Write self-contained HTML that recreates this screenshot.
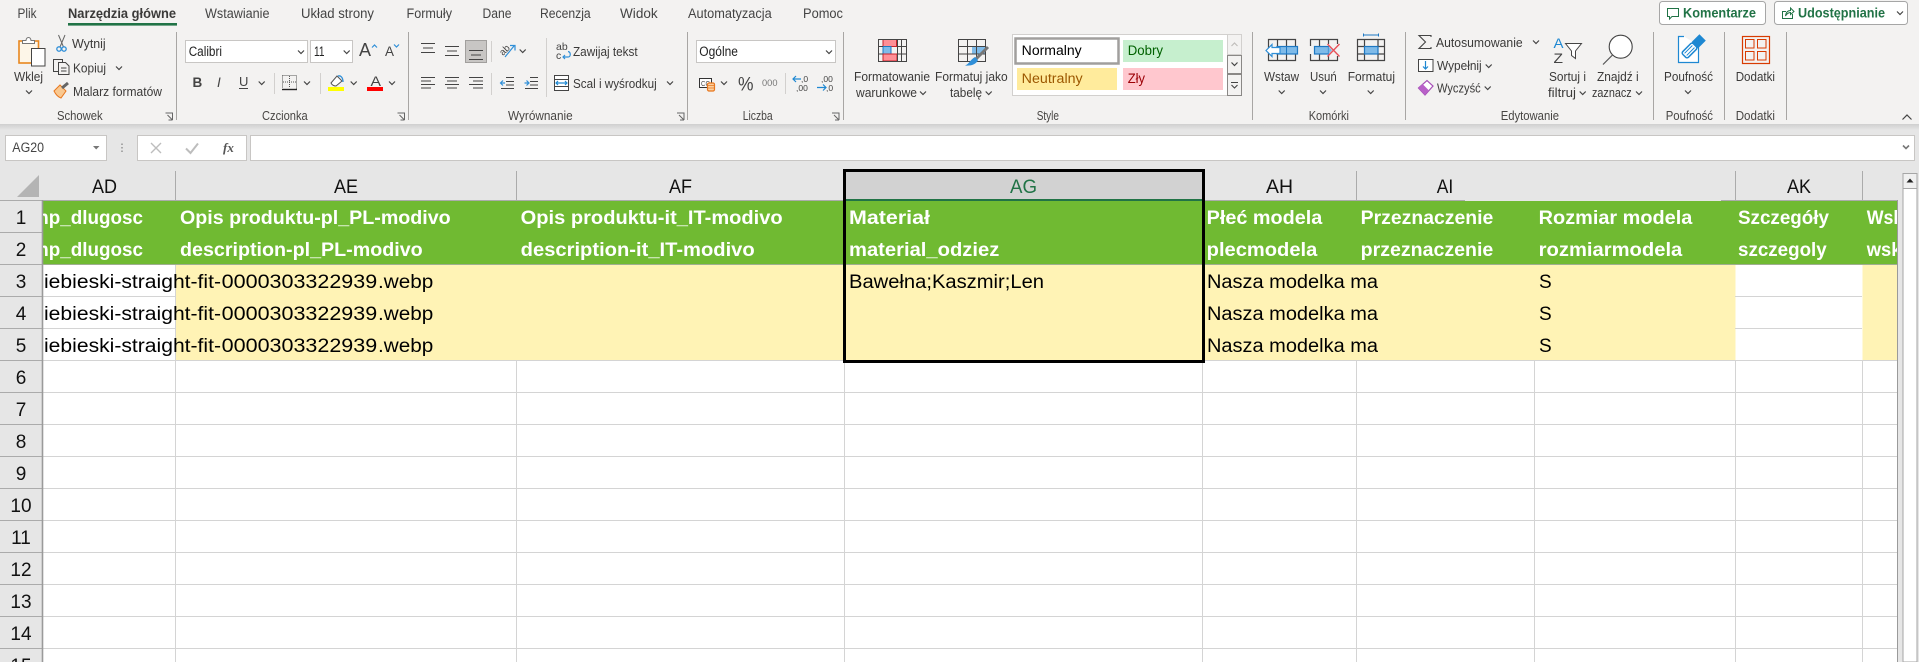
<!DOCTYPE html>
<html lang="pl"><head><meta charset="utf-8"><title>Excel</title>
<style>
html,body{margin:0;padding:0;background:#fff;overflow:hidden}
svg{display:block}
text{font-family:"Liberation Sans",sans-serif;white-space:pre}
.t{font-size:13.5px;fill:#444}
.r{font-size:12.5px;fill:#3b3a39}
.g{font-size:12.5px;fill:#484644}
.c{font-size:19px;fill:#000}
.h{font-size:19px;font-weight:bold;fill:#fff}
.n{font-size:19px;fill:#111}
.ln{fill:none;stroke:#444;stroke-width:1.1}
</style></head><body>
<svg xmlns="http://www.w3.org/2000/svg" width="1919" height="662" viewBox="0 0 1919 662">
<defs>
<path id="ch" d="M-3-1.5 0 1.5 3-1.5" fill="none" stroke="#444" stroke-width="1.2"/>
<path id="dl" d="M0 0H7V7M2 2 7 7M3 7H7" fill="none" stroke="#666" stroke-width="1"/>
<clipPath id="cl"><rect x="43" y="200" width="1854" height="462"/></clipPath>
<linearGradient id="sh" x1="0" y1="0" x2="0" y2="1"><stop offset="0" stop-color="#cfcfcf"/><stop offset="1" stop-color="#e6e6e6"/></linearGradient>
</defs>
<rect width="1919" height="662" fill="#fff"/>
<!-- ribbon -->
<rect width="1919" height="124" fill="#f3f2f1"/>
<rect y="124" width="1919" height="77" fill="#e6e6e6"/>
<rect y="124" width="1919" height="6" fill="url(#sh)"/>
<!-- tabs -->
<text class="t" x="17.5" y="18" textLength="19" lengthAdjust="spacingAndGlyphs">Plik</text>
<text class="t" x="68" y="18" textLength="108" lengthAdjust="spacingAndGlyphs" style="font-weight:bold;fill:#3b3a39">Narzędzia główne</text>
<rect x="68" y="23" width="109" height="2.6" fill="#217346"/>
<text class="t" x="205" y="18" textLength="64.5" lengthAdjust="spacingAndGlyphs">Wstawianie</text>
<text class="t" x="301" y="18" textLength="73" lengthAdjust="spacingAndGlyphs">Układ strony</text>
<text class="t" x="406.5" y="18" textLength="45.5" lengthAdjust="spacingAndGlyphs">Formuły</text>
<text class="t" x="482.5" y="18" textLength="29" lengthAdjust="spacingAndGlyphs">Dane</text>
<text class="t" x="540" y="18" textLength="50.7" lengthAdjust="spacingAndGlyphs">Recenzja</text>
<text class="t" x="620" y="18" textLength="37.7" lengthAdjust="spacingAndGlyphs">Widok</text>
<text class="t" x="688" y="18" textLength="83.7" lengthAdjust="spacingAndGlyphs">Automatyzacja</text>
<text class="t" x="803" y="18" textLength="40" lengthAdjust="spacingAndGlyphs">Pomoc</text>
<!-- top right buttons -->
<rect x="1659.5" y="1.5" width="106" height="23" rx="3" fill="#fff" stroke="#a6a6a6"/>
<path d="M1667.5 8.5H1678.5V16.5H1672L1669.5 19V16.5H1667.5Z" fill="none" stroke="#217346"/>
<text x="1683" y="17.5" textLength="73" lengthAdjust="spacingAndGlyphs" style="font-size:13.5px;font-weight:bold;fill:#217346">Komentarze</text>
<rect x="1774.5" y="1.5" width="133" height="23" rx="3" fill="#fff" stroke="#a6a6a6"/>
<path d="M1786 11.5H1782.5V18.5H1792.5V14M1785.5 16C1786 12 1788 10.5 1790.5 10.5V8L1794 11.5 1790.5 14.5V12.5C1788.5 12.5 1787 13.5 1785.5 16Z" fill="none" stroke="#217346"/>
<text x="1798" y="17.5" textLength="87" lengthAdjust="spacingAndGlyphs" style="font-size:13.5px;font-weight:bold;fill:#217346">Udostępnianie</text>
<use href="#ch" x="1900" y="13"/>
<!-- group separators -->
<g stroke="#a8a6a4" stroke-width="1">
<path d="M176.5 32V120M408.5 32V120M687.5 32V120M843.5 32V120M1252.5 32V120M1405.5 32V120M1653.5 32V120M1724.5 32V120M1786.5 32V120"/>
</g>
<g stroke="#d2d0ce" stroke-width="1">
<path d="M274.5 73V94M320.5 73V94M491.5 41V62M491.5 73V95M546.5 38V97M785.5 73V94"/>
</g>
<!-- group labels -->
<text class="g" x="57" y="120" textLength="45.7" lengthAdjust="spacingAndGlyphs">Schowek</text>
<text class="g" x="262" y="120" textLength="45.7" lengthAdjust="spacingAndGlyphs">Czcionka</text>
<text class="g" x="508" y="120" textLength="64.7" lengthAdjust="spacingAndGlyphs">Wyrównanie</text>
<text class="g" x="742.7" y="120" textLength="30" lengthAdjust="spacingAndGlyphs">Liczba</text>
<text class="g" x="1036.7" y="120" textLength="22.3" lengthAdjust="spacingAndGlyphs">Style</text>
<text class="g" x="1308.7" y="120" textLength="40.3" lengthAdjust="spacingAndGlyphs">Komórki</text>
<text class="g" x="1500.7" y="120" textLength="58.3" lengthAdjust="spacingAndGlyphs">Edytowanie</text>
<text class="g" x="1665.7" y="120" textLength="47.3" lengthAdjust="spacingAndGlyphs">Poufność</text>
<text class="g" x="1735.7" y="120" textLength="39.3" lengthAdjust="spacingAndGlyphs">Dodatki</text>
<use href="#dl" x="165.5" y="113"/><use href="#dl" x="397.5" y="113"/><use href="#dl" x="677" y="113"/><use href="#dl" x="832" y="113"/>
<path d="M1902.5 119.5 1907 115 1911.5 119.5" fill="none" stroke="#444" stroke-width="1.2"/>
<!-- clipboard -->
<rect x="19" y="41" width="19.5" height="22" fill="#fdf6e8" stroke="#e8871e" stroke-width="1.6"/>
<path d="M22.5 43.5V40.5H26C26.5 36.5 30.5 36.5 31 40.5H34.5V43.5Z" fill="#fff" stroke="#777"/>
<rect x="31.5" y="48.5" width="13.5" height="17.5" fill="#fff" stroke="#444"/>
<text class="r" x="14" y="81" textLength="29" lengthAdjust="spacingAndGlyphs">Wklej</text>
<use href="#ch" x="29" y="92"/>
<path d="M58.5 35 63.5 47M65 35 60 47" fill="none" stroke="#666"/>
<circle cx="59" cy="49" r="2.2" fill="none" stroke="#2f8fd8" stroke-width="1.3"/><circle cx="64" cy="49" r="2.2" fill="none" stroke="#2f8fd8" stroke-width="1.3"/>
<text class="r" x="72" y="48" textLength="33.7" lengthAdjust="spacingAndGlyphs">Wytnij</text>
<path d="M58 71.5H53.5V59.5H62.5V62.5M58.5 62.5H65.5L69 66V74.5H58.5ZM61 68H66.5M61 71H66.5" fill="none" stroke="#444"/>
<text class="r" x="73" y="72.5" textLength="33" lengthAdjust="spacingAndGlyphs">Kopiuj</text>
<use href="#ch" x="119" y="68"/>
<path d="M54 91 60 85 66 91 61 98C58 97 56 95 54 91Z" fill="#f9c890" stroke="#e8771e"/>
<path d="M62 88 68 83" stroke="#666" stroke-width="3" fill="none"/>
<text class="r" x="73" y="96" textLength="89" lengthAdjust="spacingAndGlyphs">Malarz formatów</text>
<!-- font -->
<rect x="185.5" y="40.5" width="122" height="22" fill="#fff" stroke="#c8c6c4"/>
<text class="t" x="188.7" y="56" textLength="33.3" lengthAdjust="spacingAndGlyphs" style="fill:#222">Calibri</text>
<use href="#ch" x="301" y="52"/>
<rect x="310.5" y="40.5" width="42" height="22" fill="#fff" stroke="#c8c6c4"/>
<text class="t" x="314" y="56" textLength="10.5" lengthAdjust="spacingAndGlyphs" style="fill:#222">11</text>
<use href="#ch" x="346.7" y="52"/>
<text x="359" y="56" textLength="12" lengthAdjust="spacingAndGlyphs" style="font-size:18px;fill:#444">A</text>
<path d="M372 47.5 374.5 45 377 47.5" fill="none" stroke="#2f8fd8" stroke-width="1.2"/>
<text x="385" y="56" textLength="9" lengthAdjust="spacingAndGlyphs" style="font-size:13.5px;fill:#444">A</text>
<path d="M394 44.5 396.5 47 399 44.5" fill="none" stroke="#2f8fd8" stroke-width="1.2"/>
<text x="192.5" y="87" style="font-size:13.5px;font-weight:bold;fill:#444">B</text>
<text x="217" y="87" style="font-size:13.5px;font-style:italic;fill:#444">I</text>
<text x="239" y="86" style="font-size:13px;fill:#444">U</text>
<path d="M239 88.5H248" stroke="#444"/>
<use href="#ch" x="261.7" y="83"/>
<path d="M282.5 75.5H296.5V88.5M282.5 75.5V88M289.5 76V88M283 82H296" fill="none" stroke="#555" stroke-dasharray="1 1"/>
<path d="M282 89.5H297" stroke="#222" stroke-width="1.4"/>
<use href="#ch" x="307" y="83"/>
<path d="M331 83 337 76 342 81 336 86C334 86 332 85 331 83Z" fill="#fff" stroke="#555"/>
<path d="M338 76C341 75 343 78 343 82" fill="none" stroke="#2f8fd8" stroke-width="1.3"/>
<rect x="328" y="87" width="16" height="4" fill="#ffff00"/>
<use href="#ch" x="353.7" y="83"/>
<text x="370.5" y="86" textLength="10.5" lengthAdjust="spacingAndGlyphs" style="font-size:14px;fill:#444">A</text>
<rect x="367" y="87" width="16" height="4" fill="#ff0000"/>
<use href="#ch" x="392" y="83"/>
<!-- alignment -->
<rect x="465.5" y="40.5" width="21" height="22" fill="#c8c6c4" stroke="#a19f9d"/>
<path class="ln" d="M421 43.5H435M423 48H433M421 52.5H435M445 46.5H459M447 51H457M445 55.5H459M469 50.5H483M471 55H481M469 59.5H483"/>
<path class="ln" d="M421 77.5H435M421 81H431M421 84.5H435M421 88H431M445 77.5H459M447 81H457M445 84.5H459M447 88H457M469 77.5H483M473 81H483M469 84.5H483M473 88H483"/>
<text x="0" y="0" transform="translate(503 56) rotate(-45)" style="font-size:9.5px;fill:#444">ab</text>
<path d="M505 57 514 46M510 45.5H515V50.5" fill="none" stroke="#2f8fd8" stroke-width="1.2"/>
<use href="#ch" x="522.7" y="51"/>
<path class="ln" d="M506 77.5H514M506 81.5H514M506 85H514M501 88.5H514"/>
<path d="M505 83H500.5M503 80.5 500.5 83 503 85.5" fill="none" stroke="#2f8fd8" stroke-width="1.2"/>
<path class="ln" d="M530 77.5H538M530 81.5H538M530 85H538M525 88.5H538"/>
<path d="M524.5 83H529M526.5 80.5 529 83 526.5 85.5" fill="none" stroke="#2f8fd8" stroke-width="1.2"/>
<text x="556" y="50" style="font-size:10.5px;fill:#444">ab</text>
<text x="556" y="59" style="font-size:10.5px;fill:#444">c</text>
<path d="M563 57H568C571 57 571 52 568 51.5M565 55 563 57 565 59" fill="none" stroke="#2f8fd8" stroke-width="1.2"/>
<text class="r" x="573" y="56" textLength="64.7" lengthAdjust="spacingAndGlyphs">Zawijaj tekst</text>
<rect x="554.5" y="75.5" width="14" height="15" fill="#fff" stroke="#444"/>
<path d="M555 79.5H568M555 86.5H568" stroke="#444"/>
<rect x="555" y="80" width="13" height="6" fill="#fff"/>
<path d="M556 83H567M558 81 556 83 558 85M565 81 567 83 565 85" fill="none" stroke="#1e88d2" stroke-width="1.2"/>
<text class="r" x="573" y="88" textLength="83.7" lengthAdjust="spacingAndGlyphs">Scal i wyśrodkuj</text>
<use href="#ch" x="670" y="83"/>
<!-- number -->
<rect x="696.5" y="40.5" width="139" height="22" fill="#fff" stroke="#c8c6c4"/>
<text class="t" x="699.3" y="56" textLength="38.7" lengthAdjust="spacingAndGlyphs" style="fill:#222">Ogólne</text>
<use href="#ch" x="829" y="52"/>
<rect x="699.5" y="78.5" width="12" height="9" fill="#fff" stroke="#333"/>
<text x="701" y="86" textLength="9" lengthAdjust="spacingAndGlyphs" style="font-size:7px;fill:#444">CC</text>
<rect x="707.5" y="83" width="7" height="8" rx="1.5" fill="#fbd0a0" stroke="#e8771e" stroke-width="1.2"/>
<path d="M707.5 85.5H714.5M707.5 88H714.5" stroke="#e8771e" stroke-width=".8"/>
<use href="#ch" x="724" y="83"/>
<text x="738" y="90.5" textLength="15.5" lengthAdjust="spacingAndGlyphs" style="font-size:19px;fill:#444">%</text>
<text x="762" y="86" textLength="15.5" lengthAdjust="spacingAndGlyphs" style="font-size:9.5px;fill:#777">000</text>
<path d="M793 79H801M796 76 793 79 796 82" fill="none" stroke="#1e88d2" stroke-width="1.2"/>
<text x="801" y="82" style="font-size:8.5px;fill:#444">,0</text>
<text x="796" y="91" style="font-size:8.5px;fill:#444">,00</text>
<text x="821" y="82" style="font-size:8.5px;fill:#444">,00</text>
<path d="M817 87.5H826M823 84.5 826 87.5 823 90.5" fill="none" stroke="#1e88d2" stroke-width="1.2"/>
<text x="826" y="91" style="font-size:8.5px;fill:#444">,0</text>
<!-- conditional format -->
<rect x="883" y="39.5" width="13.5" height="7" fill="#ff8f96" stroke="#c8232c"/>
<rect x="883" y="46.5" width="8" height="7.5" fill="#7fbbe9" stroke="#1e78c2"/>
<rect x="883" y="54" width="14" height="7" fill="#ff8f96" stroke="#c8232c"/>
<path d="M878.5 39.5H906.5V61.5H878.5ZM878.5 46.5H883M897 46.5H906.5M878.5 54H883M897 54H906.5M885 39.5M897.5 39.5V61.5M901.5 39.5V61.5" fill="none" stroke="#444"/>
<text class="r" x="854" y="81" textLength="76" lengthAdjust="spacingAndGlyphs">Formatowanie</text>
<text class="r" x="856" y="97" textLength="61" lengthAdjust="spacingAndGlyphs">warunkowe</text>
<use href="#ch" x="923" y="93"/>
<!-- format as table -->
<rect x="972" y="46.5" width="14" height="7.5" fill="#7fbbe9"/>
<path d="M958.5 39.5H985.5V61.5H958.5ZM958.5 46.5H985.5M958.5 54H985.5M967.5 39.5V61.5M976.5 39.5V61.5" fill="none" stroke="#444"/>
<path d="M988 47 976 59" stroke="#777" stroke-width="3"/>
<path d="M975 57 978 60C976 65 970 66 965 65.5 969 64 970 60 975 57Z" fill="#2f8fd8"/>
<text class="r" x="935" y="81" textLength="72.7" lengthAdjust="spacingAndGlyphs">Formatuj jako</text>
<text class="r" x="950" y="97" textLength="32" lengthAdjust="spacingAndGlyphs">tabelę</text>
<use href="#ch" x="988.7" y="93"/>
<!-- styles -->
<rect x="1012.5" y="34.5" width="229" height="61" fill="#fff" stroke="#d2d0ce"/>
<rect x="1015.5" y="38.5" width="103" height="25" fill="#fff" stroke="#a19f9d" stroke-width="2.5"/>
<text class="t" x="1021.7" y="55" textLength="60" lengthAdjust="spacingAndGlyphs" style="fill:#000">Normalny</text>
<rect x="1123" y="40" width="100" height="22" fill="#c6efce"/>
<text class="t" x="1127.7" y="55" textLength="35.3" lengthAdjust="spacingAndGlyphs" style="fill:#006100">Dobry</text>
<rect x="1017" y="68" width="100" height="22" fill="#ffeb9c"/>
<text class="t" x="1021.7" y="83" textLength="61" lengthAdjust="spacingAndGlyphs" style="fill:#9c5700">Neutralny</text>
<rect x="1123" y="68" width="100" height="22" fill="#ffc7ce"/>
<text class="t" x="1127.7" y="83" textLength="17.3" lengthAdjust="spacingAndGlyphs" style="fill:#9c0006">Zły</text>
<rect x="1227.5" y="34.5" width="14" height="20" fill="#f3f2f1" stroke="#d2d0ce"/>
<path d="M1231.5 46 1234.5 43 1237.5 46" fill="none" stroke="#c0bebc" stroke-width="1.2"/>
<rect x="1227.5" y="55.5" width="14" height="18" fill="#f3f2f1" stroke="#8a8886"/>
<use href="#ch" x="1234.5" y="64"/>
<rect x="1227.5" y="74.5" width="14" height="21" fill="#f3f2f1" stroke="#8a8886"/>
<path d="M1231 82.5H1238M1231.5 85 1234.5 88 1237.5 85" fill="none" stroke="#444" stroke-width="1.1"/>
<!-- cells -->
<path d="M1268.5 39.5H1295.5V60.5H1268.5ZM1277.5 39.5V60.5M1286.5 39.5V60.5" fill="none" stroke="#444" stroke-width="1.2"/>
<rect x="1277" y="46.5" width="20.5" height="7.5" fill="#7fbbe9" stroke="#1e78c2" stroke-width="1.2"/>
<path d="M1286.5 46.5V54" stroke="#1e78c2"/>
<path d="M1266 50.5 1272 44.5V47.5H1280V53.5H1272V56.5Z" fill="#fff" stroke="#2f8fd8" stroke-width="1.2"/>
<text class="r" x="1264" y="81" textLength="35" lengthAdjust="spacingAndGlyphs">Wstaw</text>
<use href="#ch" x="1281.7" y="92"/>
<path d="M1310.5 46V39.5H1337.5V44M1337.5 56V60.5H1310.5V54M1319.5 39.5V46M1319.5 54V60.5M1328.5 39.5V44M1328.5 56V60.5" fill="none" stroke="#444" stroke-width="1.2"/>
<rect x="1314.5" y="46.5" width="14" height="7.5" fill="#7fbbe9" stroke="#1e78c2" stroke-width="1.2"/>
<path d="M1328.5 46.5 1332 50.2 1328.5 54Z" fill="#7fbbe9"/>
<path d="M1327.5 44 1339.5 56.5M1339.5 44 1327.5 56.5" stroke="#e8525a" stroke-width="1.4"/>
<text class="r" x="1310" y="81" textLength="26.7" lengthAdjust="spacingAndGlyphs">Usuń</text>
<use href="#ch" x="1323" y="92"/>
<path d="M1357.5 39.5H1384.5V60.5H1357.5ZM1357.5 46.5H1364.5M1378 46.5H1384.5M1357.5 54H1364.5M1378 54H1384.5M1364.5 39.5V46M1364.5 54V60.5M1378 39.5V46M1378 54V60.5" fill="none" stroke="#444" stroke-width="1.2"/>
<rect x="1364.5" y="46.5" width="13.5" height="7.5" fill="#7fbbe9" stroke="#1e78c2" stroke-width="1.2"/>
<path d="M1363.5 33.5V36.5M1363.5 35H1378.5M1378.5 33.5V36.5" fill="none" stroke="#1e78c2"/>
<text class="r" x="1347.7" y="81" textLength="47.3" lengthAdjust="spacingAndGlyphs">Formatuj</text>
<use href="#ch" x="1370.7" y="92"/>
<!-- editing -->
<path d="M1431 37V35.5H1419L1425.5 42 1419 48.5H1431V47" fill="none" stroke="#444" stroke-width="1.1"/>
<text class="r" x="1436" y="47" textLength="86.7" lengthAdjust="spacingAndGlyphs">Autosumowanie</text>
<use href="#ch" x="1536" y="42"/>
<rect x="1418.5" y="59.5" width="14.5" height="12" fill="#fff" stroke="#444"/>
<path d="M1425.5 61V69M1423 66.5 1425.5 69 1428 66.5" fill="none" stroke="#1e88d2" stroke-width="1.2"/>
<text class="r" x="1437" y="70" textLength="44.7" lengthAdjust="spacingAndGlyphs">Wypełnij</text>
<use href="#ch" x="1488.7" y="66"/>
<path d="M1418.5 88 1427 80.5 1433 86 1425 95Z" fill="#fff" stroke="#a750b8" stroke-width="1.2"/>
<path d="M1418.5 88 1422.5 84 1428.5 90 1425 95Z" fill="#b860c8"/>
<text class="r" x="1437" y="92.3" textLength="43.7" lengthAdjust="spacingAndGlyphs">Wyczyść</text>
<use href="#ch" x="1487.7" y="88"/>
<text x="1553.5" y="48" textLength="10" lengthAdjust="spacingAndGlyphs" style="font-size:14px;fill:#1e88d2">A</text>
<text x="1553.5" y="63" textLength="9.5" lengthAdjust="spacingAndGlyphs" style="font-size:14px;fill:#444">Z</text>
<path d="M1565.5 43.5H1581.5L1575.5 51V58.5L1571.5 55.5V51Z" fill="#fff" stroke="#444"/>
<text class="r" x="1549" y="81" textLength="37" lengthAdjust="spacingAndGlyphs">Sortuj i</text>
<text class="r" x="1548" y="97" textLength="28" lengthAdjust="spacingAndGlyphs">filtruj</text>
<use href="#ch" x="1582.7" y="93"/>
<circle cx="1620.7" cy="46.7" r="11.5" fill="#fff" stroke="#444" stroke-width="1.1"/>
<path d="M1612.5 55 1603 64.5" stroke="#555" stroke-width="1.2"/>
<text class="r" x="1597" y="81" textLength="41.7" lengthAdjust="spacingAndGlyphs">Znajdź i</text>
<text class="r" x="1592" y="97" textLength="39.7" lengthAdjust="spacingAndGlyphs">zaznacz</text>
<use href="#ch" x="1639" y="93"/>
<!-- confidentiality -->
<path d="M1684 36.5H1678.5V62.5H1698.5V45" fill="#fff" stroke="#1e88d2" stroke-width="1.2"/>
<g transform="rotate(45 1692 48)"><rect x="1687.5" y="33" width="9" height="11" fill="#1e88d2"/><rect x="1688" y="44" width="8" height="15" rx="2" fill="#fff" stroke="#1e88d2" stroke-width="1.5"/><path d="M1690.5 46V57M1693.5 46V57" stroke="#1e88d2"/></g>
<text class="r" x="1664" y="81" textLength="49" lengthAdjust="spacingAndGlyphs">Poufność</text>
<use href="#ch" x="1688" y="92"/>
<rect x="1742.5" y="36.5" width="27" height="27" fill="none" stroke="#d83b01" stroke-width="1.2"/>
<path d="M1745.5 39.5H1754V48H1745.5ZM1757.5 39.5H1766V48H1757.5ZM1745.5 51.5H1754V60H1745.5ZM1757.5 51.5H1766V60H1757.5Z" fill="none" stroke="#d83b01"/>
<text class="r" x="1735.7" y="81" textLength="39.3" lengthAdjust="spacingAndGlyphs">Dodatki</text>
<!-- formula bar -->
<rect x="5.5" y="135.5" width="101" height="25" fill="#fff" stroke="#c8c6c4"/>
<text x="12.3" y="152" textLength="31.7" lengthAdjust="spacingAndGlyphs" style="font-size:13.5px;fill:#444">AG20</text>
<path d="M93 146H99.5L96.2 149.5Z" fill="#777"/>
<path d="M122 143.5V145M122 147V148.5M122 150.5V152" stroke="#999" stroke-width="1.6"/>
<rect x="137.5" y="135.5" width="109" height="25" fill="#fff" stroke="#c8c6c4"/>
<path d="M151 143 161 153M161 143 151 153" stroke="#bdbdbd" stroke-width="1.4"/>
<path d="M186 148.5 190.5 153 198 143.5" fill="none" stroke="#bdbdbd" stroke-width="2"/>
<text x="223" y="152" style="font-size:13px;font-style:italic;font-family:'Liberation Serif',serif;font-weight:bold;fill:#555">fx</text>
<rect x="250.5" y="135.5" width="1664" height="25" fill="#fff" stroke="#c8c6c4"/>
<path d="M1903 145.5 1906 148.5 1909 145.5" fill="none" stroke="#777" stroke-width="1.6"/>
<!-- sheet fills -->
<rect x="0" y="200" width="43" height="462" fill="#e6e6e6"/>
<rect x="1898" y="171" width="21" height="491" fill="#e6e6e6"/>
<rect x="43" y="201" width="1855" height="63" fill="#70ba32"/>
<rect x="175.5" y="265" width="1560" height="95" fill="#fff3b5"/>
<rect x="1862.5" y="265" width="35" height="95" fill="#fff3b5"/>
<!-- gridlines -->
<g stroke="#d4d4d4" stroke-width="1">
<path d="M43 296.5H175M43 328.5H175M1735 296.5H1862M1735 328.5H1862"/>
<path d="M43 360.5H1897M43 392.5H1897M43 424.5H1897M43 456.5H1897M43 488.5H1897M43 520.5H1897M43 552.5H1897M43 584.5H1897M43 616.5H1897M43 648.5H1897"/>
<path d="M175.5 265V662M516.5 361V662M844.5 361V662M1202.5 361V662M1356.5 361V662M1534.5 361V662M1735.5 361V662M1862.5 361V662"/>
</g>
<!-- headers lines -->
<g stroke="#ababab" stroke-width="1">
<path d="M175.5 171V200M516.5 171V200M1356.5 171V200M1735.5 171V200M1862.5 171V200"/>
<path d="M43 200.5H1465M1721 200.5H1897M0 200.5H43M0 232.5H42M0 264.5H42M0 296.5H42M0 328.5H42M0 360.5H42M0 392.5H42M0 424.5H42M0 456.5H42M0 488.5H42M0 520.5H42M0 552.5H42M0 584.5H42M0 616.5H42M0 648.5H42"/>
<path d="M42.5 200V662" stroke-width="1.6" stroke="#9a9a9a"/>
<path d="M43 264.5H1897" stroke="#9fae90"/>
<path d="M1897.5 200V662" stroke="#9a9a9a"/>
</g>
<path d="M17 197H39V175Z" fill="#b4b4b4"/>
<!-- scrollbar -->
<rect x="1903" y="188" width="14" height="474" fill="#fff" stroke="#a6a6a6"/>
<rect x="1903" y="173.5" width="14" height="15" fill="#f0f0f0" stroke="#a6a6a6"/>
<path d="M1906.5 182.5H1913.5L1910 178.5Z" fill="#222"/>
<!-- active column header -->
<rect x="844" y="171" width="358" height="29" fill="#d2d2d2"/>
<rect x="844" y="199" width="358" height="2" fill="#217346"/>
<!-- col letters -->
<text class="n" x="92" y="193" textLength="25" lengthAdjust="spacingAndGlyphs">AD</text>
<text class="n" x="334" y="193" textLength="24" lengthAdjust="spacingAndGlyphs">AE</text>
<text class="n" x="669" y="193" textLength="23" lengthAdjust="spacingAndGlyphs">AF</text>
<text class="n" x="1010" y="193" textLength="27" lengthAdjust="spacingAndGlyphs" style="fill:#217346">AG</text>
<text class="n" x="1266" y="193" textLength="27" lengthAdjust="spacingAndGlyphs">AH</text>
<text class="n" x="1436.7" y="193" textLength="16.5" lengthAdjust="spacingAndGlyphs">AI</text>
<text class="n" x="1787" y="193" textLength="24" lengthAdjust="spacingAndGlyphs">AK</text>
<!-- row numbers -->
<g text-anchor="middle">
<text class="n" x="21" y="224">1</text><text class="n" x="21" y="256">2</text><text class="n" x="21" y="288">3</text><text class="n" x="21" y="320">4</text><text class="n" x="21" y="352">5</text><text class="n" x="21" y="384">6</text><text class="n" x="21" y="416">7</text><text class="n" x="21" y="448">8</text><text class="n" x="21" y="480">9</text><text class="n" x="21" y="512">10</text><text class="n" x="21" y="544">11</text><text class="n" x="21" y="576">12</text><text class="n" x="21" y="608">13</text><text class="n" x="21" y="640">14</text><text class="n" x="21" y="672">15</text>
</g>
<!-- cell text -->
<g clip-path="url(#cl)">
<text class="h" x="32" y="224" textLength="111" lengthAdjust="spacingAndGlyphs">mp_dlugosc</text>
<text class="h" x="32" y="256" textLength="111" lengthAdjust="spacingAndGlyphs">mp_dlugosc</text>
<text class="c" x="44" y="288" textLength="177" lengthAdjust="spacingAndGlyphs">iebieski-straight-fit-</text><text class="c" x="221.7" y="288" textLength="155.5" lengthAdjust="spacingAndGlyphs">0000303322939</text><text class="c" x="378" y="288" textLength="55.3" lengthAdjust="spacingAndGlyphs">.webp</text>
<text class="c" x="44" y="320" textLength="177" lengthAdjust="spacingAndGlyphs">iebieski-straight-fit-</text><text class="c" x="221.7" y="320" textLength="155.5" lengthAdjust="spacingAndGlyphs">0000303322939</text><text class="c" x="378" y="320" textLength="55.3" lengthAdjust="spacingAndGlyphs">.webp</text>
<text class="c" x="44" y="352" textLength="177" lengthAdjust="spacingAndGlyphs">iebieski-straight-fit-</text><text class="c" x="221.7" y="352" textLength="155.5" lengthAdjust="spacingAndGlyphs">0000303322939</text><text class="c" x="378" y="352" textLength="55.3" lengthAdjust="spacingAndGlyphs">.webp</text>
<text class="h" x="180" y="224" textLength="270.7" lengthAdjust="spacingAndGlyphs">Opis produktu-pl_PL-modivo</text>
<text class="h" x="180" y="256" textLength="242.7" lengthAdjust="spacingAndGlyphs">description-pl_PL-modivo</text>
<text class="h" x="520.7" y="224" textLength="262" lengthAdjust="spacingAndGlyphs">Opis produktu-it_IT-modivo</text>
<text class="h" x="520.7" y="256" textLength="234" lengthAdjust="spacingAndGlyphs">description-it_IT-modivo</text>
<text class="h" x="849" y="224" textLength="81" lengthAdjust="spacingAndGlyphs">Materiał</text>
<text class="h" x="849" y="256" textLength="150.3" lengthAdjust="spacingAndGlyphs">material_odziez</text>
<text class="c" x="849" y="288" textLength="195" lengthAdjust="spacingAndGlyphs">Bawełna;Kaszmir;Len</text>
<text class="h" x="1206.7" y="224" textLength="115.6" lengthAdjust="spacingAndGlyphs">Płeć modela</text>
<text class="h" x="1206.7" y="256" textLength="110.6" lengthAdjust="spacingAndGlyphs">plecmodela</text>
<text class="c" x="1207" y="288" textLength="171" lengthAdjust="spacingAndGlyphs">Nasza modelka ma</text>
<text class="c" x="1207" y="320" textLength="171" lengthAdjust="spacingAndGlyphs">Nasza modelka ma</text>
<text class="c" x="1207" y="352" textLength="171" lengthAdjust="spacingAndGlyphs">Nasza modelka ma</text>
<text class="h" x="1360.7" y="224" textLength="132.6" lengthAdjust="spacingAndGlyphs">Przeznaczenie</text>
<text class="h" x="1360.7" y="256" textLength="132.6" lengthAdjust="spacingAndGlyphs">przeznaczenie</text>
<text class="h" x="1538.7" y="224" textLength="153.6" lengthAdjust="spacingAndGlyphs">Rozmiar modela</text>
<text class="h" x="1538.7" y="256" textLength="143.6" lengthAdjust="spacingAndGlyphs">rozmiarmodela</text>
<text class="c" x="1539" y="288">S</text><text class="c" x="1539" y="320">S</text><text class="c" x="1539" y="352">S</text>
<text class="h" x="1738" y="224" textLength="91" lengthAdjust="spacingAndGlyphs">Szczegóły</text>
<text class="h" x="1738" y="256" textLength="88.7" lengthAdjust="spacingAndGlyphs">szczegoly</text>
<text class="h" x="1866.7" y="224" textLength="95" lengthAdjust="spacingAndGlyphs">Wskazówki</text>
<text class="h" x="1866.7" y="256" textLength="95" lengthAdjust="spacingAndGlyphs">wskazowki</text>
</g>
<!-- selection -->
<rect x="844.5" y="170.5" width="359" height="191" fill="none" stroke="#000" stroke-width="3"/>
</svg>
</body></html>
